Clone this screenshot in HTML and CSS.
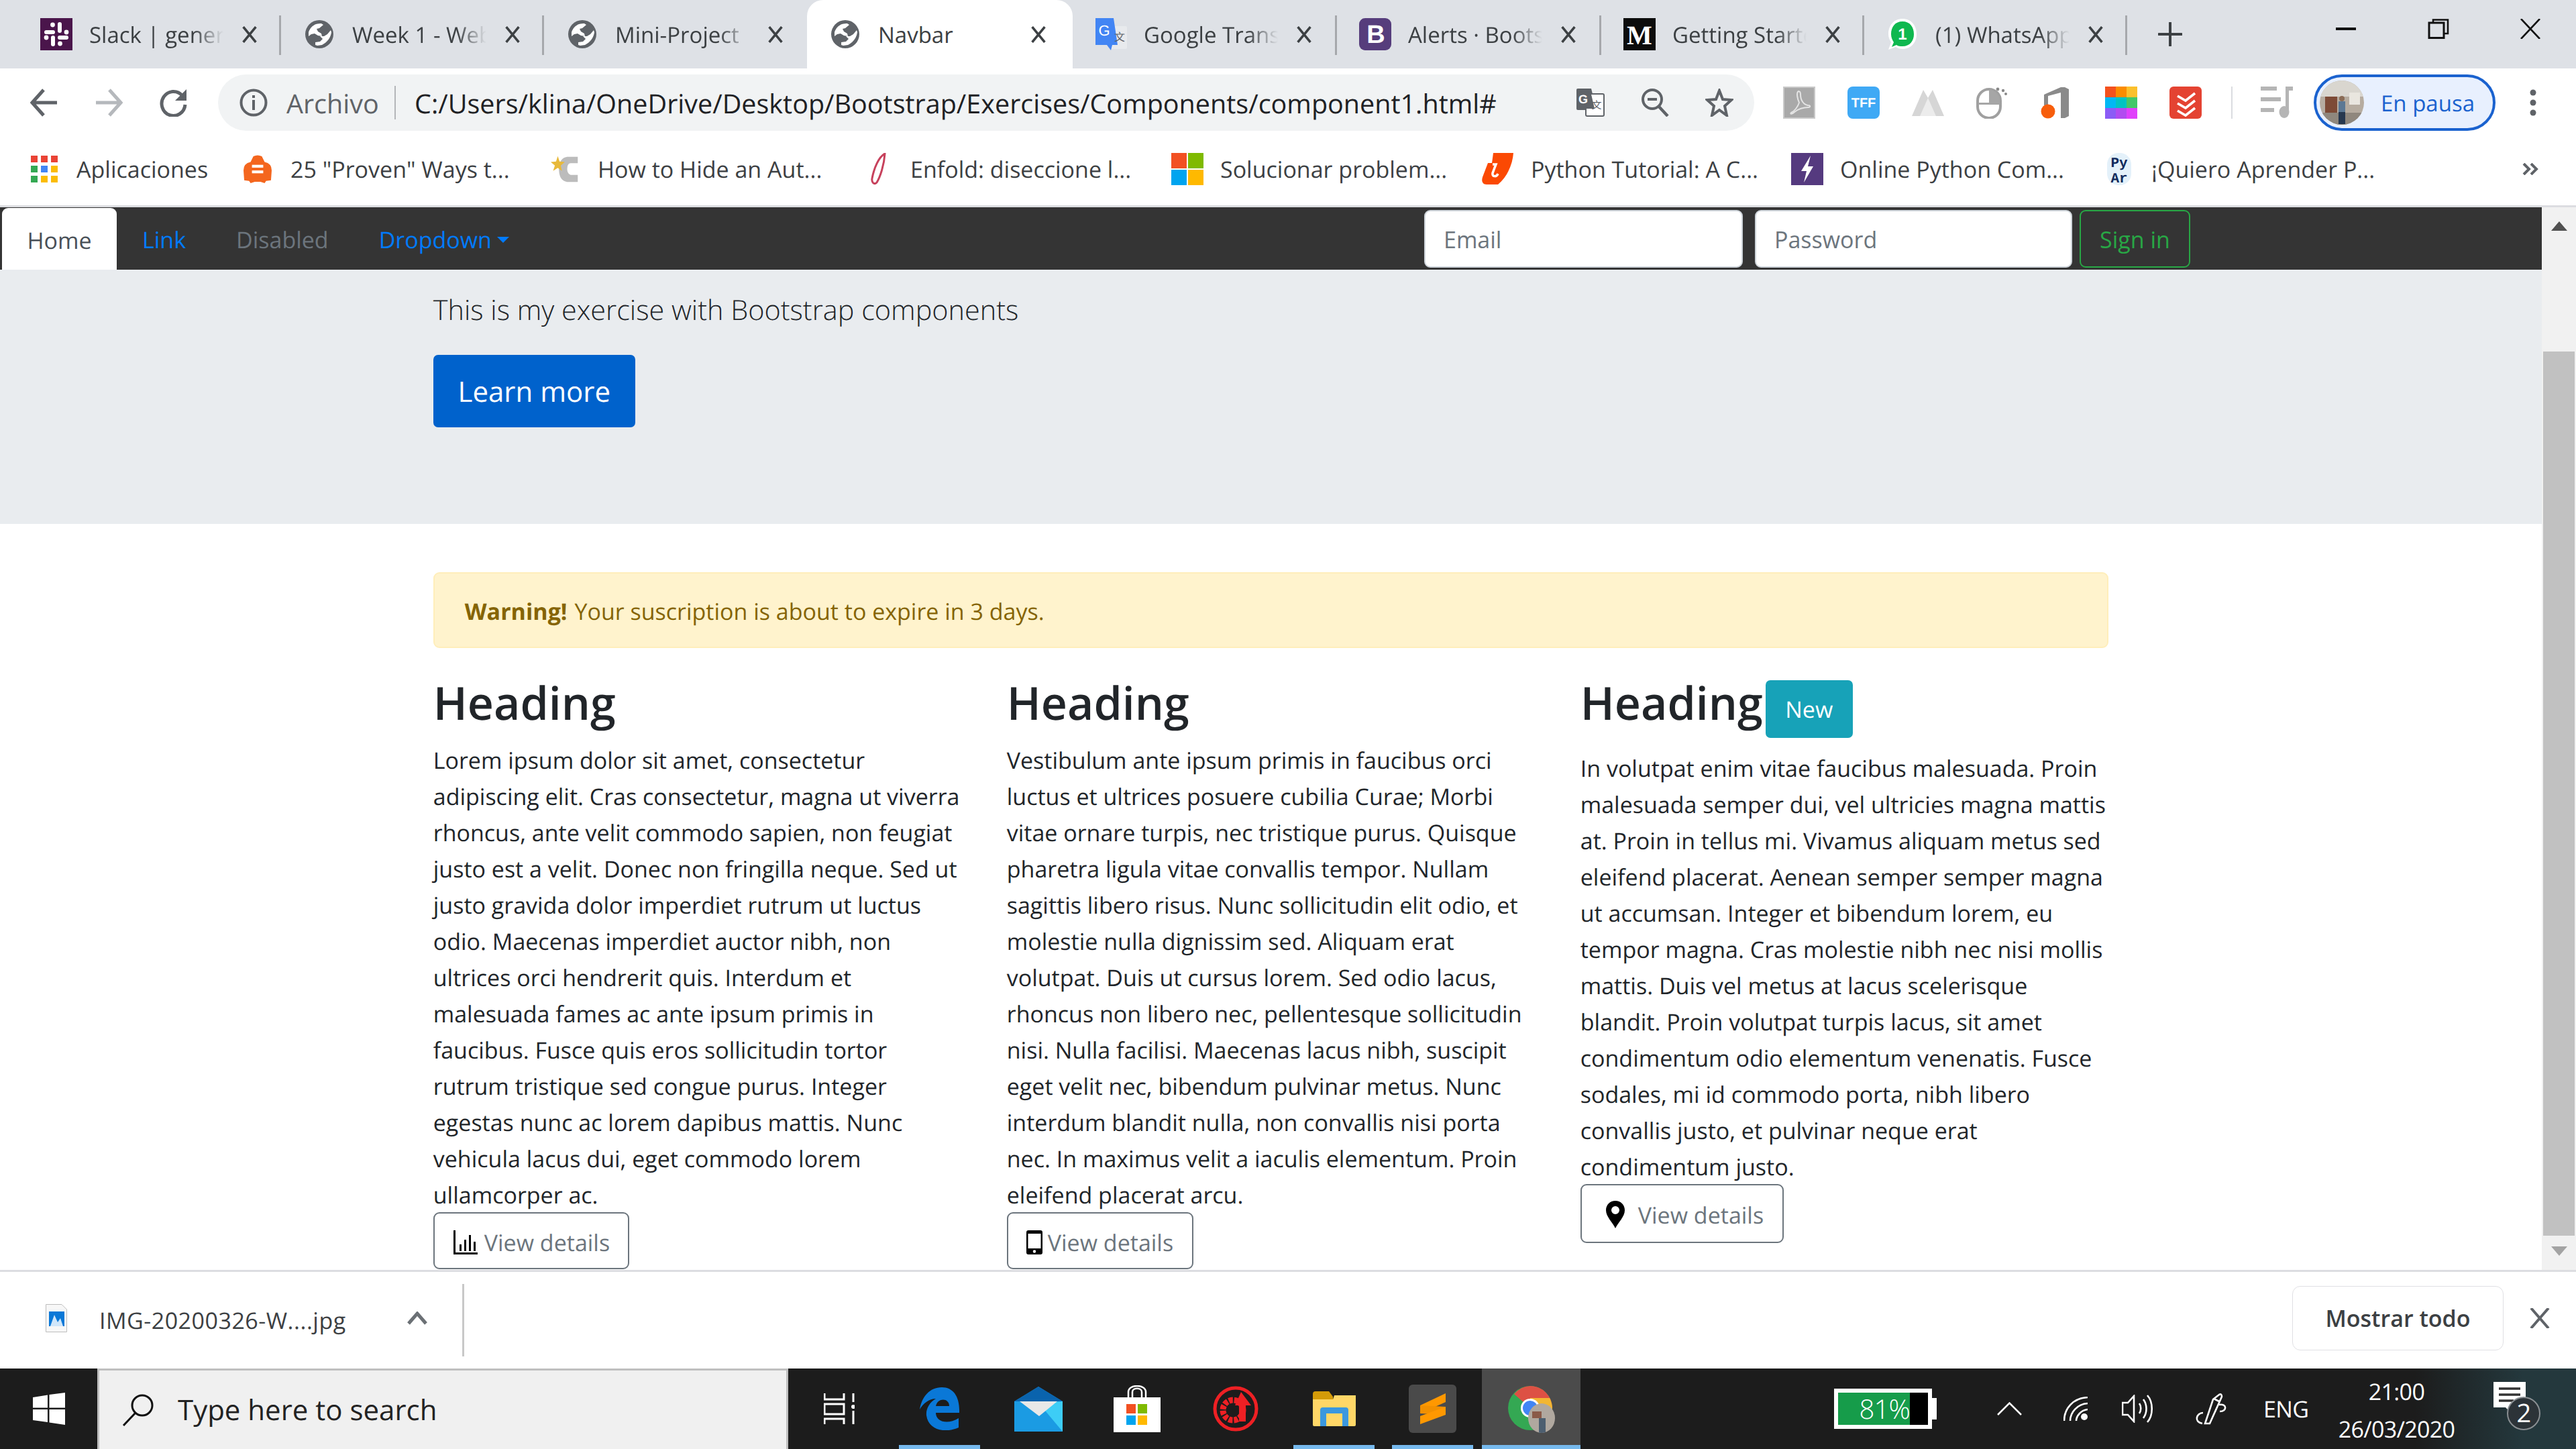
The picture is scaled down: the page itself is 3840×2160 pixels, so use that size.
FILE: index.html
```html
<!DOCTYPE html>
<html lang="en">
<head>
<meta charset="utf-8">
<title>Navbar</title>
<link rel="stylesheet" href="styles.css">
</head>
<body>
<svg class="defs" width="0" height="0">
  <symbol id="globe" viewBox="0 0 42 42"><circle cx="21" cy="21" r="21" fill="#5f6368"/><path d="M5 24 L5 18 C7 12 11 8 16 6 C19 5 22 5 24 5 L27 7 L21 12 L17 13 L19 17 L24 20 L25 24 L19 23 L14 20 L9 21 Z" fill="#fff"/><path d="M38 15 L39 18 C38 26 33 33 25 37 L18 38 L15 37 L15 33 L22 32 L26 28 L22 24 L28 24 L33 21 Z" fill="#fff"/></symbol>
  <symbol id="close" viewBox="0 0 24 24"><path d="M3 1 L21 23 M21 1 L3 23" stroke="#3c4043" stroke-width="3.4" fill="none"/></symbol>
</svg>

<header class="tabstrip">
  <div class="tab"><svg class="fav" viewBox="0 0 48 48"><rect width="48" height="48" fill="#4a154b"/><g fill="#fff"><rect x="6" y="18" width="16" height="6" rx="3"/><circle cx="18.500" cy="10" r="3.400"/><rect x="26" y="6" width="6" height="16" rx="3"/><circle cx="39" cy="21" r="3.400"/><rect x="26" y="26" width="16" height="6" rx="3"/><circle cx="29.500" cy="38" r="3.400"/><rect x="16" y="26" width="6" height="16" rx="3"/><circle cx="9" cy="29" r="3.400"/></g></svg><span class="tab-title">Slack | general</span><svg class="x"><use href="#close"/></svg></div>
  <div class="tab"><svg class="fav globe"><use href="#globe"/></svg><span class="tab-title">Week 1 - Web</span><svg class="x"><use href="#close"/></svg></div>
  <div class="tab tab-nosep"><svg class="fav globe"><use href="#globe"/></svg><span class="tab-title">Mini-Project</span><svg class="x"><use href="#close"/></svg></div>
  <div class="tab tab-active"><svg class="fav globe"><use href="#globe"/></svg><span class="tab-title">Navbar</span><svg class="x"><use href="#close"/></svg></div>
  <div class="tab"><svg class="fav" viewBox="0 0 48 48"><rect x="22" y="12" width="26" height="34" rx="2" fill="#e8eaed"/><path d="M1 0 H28 L34 40 H26 L24 48 L18 40 H1 Z" fill="#4285f4"/><text x="14" y="26" class="svgtxt" font-size="22" fill="#fff" text-anchor="middle">G</text><text x="37" y="34" class="svgtxt" font-size="16" fill="#5f6368" text-anchor="middle">文</text></svg><span class="tab-title">Google Translate</span><svg class="x"><use href="#close"/></svg></div>
  <div class="tab"><svg class="fav" viewBox="0 0 48 48"><rect width="48" height="48" rx="9" fill="#563d7c"/><text x="25" y="37" class="svgtxt" font-size="38" font-weight="700" fill="#fff" text-anchor="middle">B</text></svg><span class="tab-title">Alerts · Bootstrap</span><svg class="x"><use href="#close"/></svg></div>
  <div class="tab"><svg class="fav" viewBox="0 0 48 48"><rect width="48" height="48" fill="#0c0c0c"/><text x="24" y="39" class="svgserif" font-size="40" font-weight="700" fill="#fff" text-anchor="middle">M</text></svg><span class="tab-title">Getting Started</span><svg class="x"><use href="#close"/></svg></div>
  <div class="tab"><svg class="fav" viewBox="0 0 48 48"><path d="M24 1 C11 1 3 11 3 24 C3 29 5 33 7 36 L3 47 L14 43 C17 45 20 46 24 46 C37 46 45 36 45 24 C45 11 37 1 24 1 Z" fill="#fff"/><path d="M24 5 C13 5 7 13 7 24 C7 29 9 33 11 36 L8 43 L15 40 C18 42 20 42 24 42 C35 42 41 34 41 24 C41 13 35 5 24 5 Z" fill="#0fb84f"/><text x="24" y="32" class="svgtxt" font-size="24" font-weight="700" fill="#fff" text-anchor="middle">1</text></svg><span class="tab-title">(1) WhatsApp</span><svg class="x"><use href="#close"/></svg></div>
  <svg class="newtab" viewBox="0 0 36 36"><path d="M18 1 V35 M1 18 H35" stroke="#3c4043" stroke-width="4" stroke-linecap="round"/></svg>
  <div class="winctl">
    <svg class="win-min" viewBox="0 0 30 4"><rect width="30" height="4" fill="#111"/></svg>
    <svg class="win-max" viewBox="0 0 32 30"><path d="M8 5 V1.500 H30 V22 H24" fill="none" stroke="#111" stroke-width="2.600"/><rect x="2" y="6" width="22" height="22.500" fill="none" stroke="#111" stroke-width="3"/></svg>
    <svg class="win-close" viewBox="0 0 30 30"><path d="M1 0 L29 30 M29 0 L1 30" stroke="#111" stroke-width="2.6"/></svg>
  </div>
</header>

<nav class="toolbar">
  <svg class="nav-ic" viewBox="0 0 42 42"><path d="M40 21 H5 M20 2 L3 21 L20 40" fill="none" stroke="#5f6368" stroke-width="5"/></svg>
  <svg class="nav-ic" viewBox="0 0 42 42"><path d="M2 21 H37 M22 2 L39 21 L22 40" fill="none" stroke="#b5b8bc" stroke-width="5"/></svg>
  <svg class="nav-ic" viewBox="0 0 42 42"><path d="M35 11 A17.5 18 0 1 0 39 24" fill="none" stroke="#5f6368" stroke-width="5"/><path d="M41 1 V18 H24 Z" fill="#5f6368"/></svg>
  <div class="omnibox">
    <svg class="info" viewBox="0 0 42 42"><circle cx="21" cy="21" r="18.5" fill="none" stroke="#5f6368" stroke-width="4"/><rect x="19" y="17" width="4" height="15" fill="#5f6368"/><rect x="19" y="10" width="4" height="4" fill="#5f6368"/></svg>
    <span class="archivo">Archivo</span>
    <span class="url">C:/Users/klina/OneDrive/Desktop/Bootstrap/Exercises/Components/component1.html#</span>
    <svg class="o-ic o-trans" viewBox="0 0 42 42"><path d="M0 2 Q0 0 2 0 H22 L30 32 H2 Q0 32 0 30 Z" fill="#5f6368"/><rect x="14" y="8" width="27" height="33" rx="2" fill="#fff" stroke="#5f6368" stroke-width="2"/><path d="M14 0 H20 L27 30 H14 Z" fill="#5f6368"/><text x="10" y="22" class="svgtxt" font-size="18" font-weight="700" fill="#fff" text-anchor="middle">G</text><text x="30" y="30" class="svgtxt" font-size="15" fill="#5f6368" text-anchor="middle">文</text></svg>
    <svg class="o-ic o-zoom" viewBox="0 0 42 42"><circle cx="17" cy="16" r="14" fill="none" stroke="#5f6368" stroke-width="4"/><path d="M27 27 L40 41" stroke="#5f6368" stroke-width="4.5"/><rect x="10" y="14" width="14" height="4" fill="#5f6368"/></svg>
    <svg class="o-ic o-star" viewBox="0 0 42 42"><path d="M21 3 L26 16 L39 17 L29 26 L32 40 L21 32 L10 40 L13 26 L3 17 L16 16 Z" fill="none" stroke="#5f6368" stroke-width="4"/></svg>
  </div>
  <div class="extensions">
    <svg viewBox="0 0 48 48"><rect width="48" height="48" fill="#a9a9a9"/><rect x="1" y="1" width="46" height="46" fill="none" stroke="#c9c9c9" stroke-width="2"/><path d="M23 7 C19 9 22 20 24 24 C22 30 17 37 12 39 C10 41 13 42 17 38 C22 34 30 31 38 31 C41 31 41 28 37 28 C31 27 26 21 26 12 C26 8 25 7 23 7 Z" fill="none" stroke="#e4e4e4" stroke-width="2"/></svg>
    <svg viewBox="0 0 48 48"><rect width="48" height="48" rx="8" fill="#3fa9f5"/><text x="24" y="31" class="svgtxt" font-size="20" font-weight="700" fill="#fff" text-anchor="middle">TFF</text></svg>
    <svg viewBox="0 0 48 48"><path d="M0 44 L17 5 L24 17 L31 5 L48 44 Z" fill="#d6d6d6"/><path d="M12 44 L24 17 L36 44 Z" fill="#ececec"/></svg>
    <svg viewBox="0 0 48 48"><rect x="2" y="4" width="34" height="43" rx="17" fill="none" stroke="#a0a0a0" stroke-width="4"/><path d="M19 5 A16 16 0 0 1 35 21 V27 H3 V24 H19 Z" fill="#a6a6a6"/><circle cx="32" cy="4" r="2.4" fill="#888"/><circle cx="40" cy="6" r="2.2" fill="#888"/><circle cx="44" cy="11" r="2" fill="#888"/></svg>
    <svg viewBox="0 0 48 48"><path d="M5 12 L30 1 H36 L42 4 V44 L36 47 H30 V9 L11 14 V28 H5 Z" fill="#8a8a8a"/><circle cx="11" cy="37" r="10.5" fill="#f75e0c"/></svg>
    <svg viewBox="0 0 48 48"><rect width="16" height="16" fill="#f4511e"/><rect x="16" width="16" height="16" fill="#fb8c00"/><rect x="32" width="16" height="16" fill="#fbc02d"/><rect y="16" width="16" height="16" fill="#00b8f4"/><rect x="16" y="16" width="16" height="16" fill="#00c3c3"/><rect x="32" y="16" width="16" height="16" fill="#43c769"/><rect y="32" width="16" height="16" fill="#8b5cf6"/><rect x="16" y="32" width="16" height="16" fill="#b14cf0"/><rect x="32" y="32" width="16" height="16" fill="#e040fb"/></svg>
    <svg class="ext-last" viewBox="0 0 48 48"><rect width="48" height="48" rx="6" fill="#e44332"/><path d="M12 14 L24 21 L38 10 M12 25 L24 32 L38 21 M12 36 L24 43 L38 32" fill="none" stroke="#fff" stroke-width="3.6"/></svg>
    <span class="ext-sep"></span>
    <svg viewBox="0 0 48 48"><g fill="#b5b5b5"><rect y="0" width="24" height="6"/><rect y="16" width="30" height="6"/><rect y="32" width="20" height="6"/><rect x="37" y="0" width="11" height="6"/><rect x="37" y="0" width="5" height="38"/><ellipse cx="35" cy="38" rx="7.5" ry="9"/></g></svg>
  </div>
  <div class="profile">
    <svg class="avatar" viewBox="0 0 66 66"><defs><clipPath id="av"><circle cx="33" cy="33" r="33"/></clipPath></defs><g clip-path="url(#av)"><rect width="66" height="66" fill="#b6aca0"/><rect y="0" width="66" height="24" fill="#d9d6cf"/><rect x="8" y="24" width="18" height="24" fill="#7d4a36"/><rect x="44" y="18" width="16" height="18" fill="#e9e6df"/><rect y="48" width="66" height="18" fill="#8f877d"/><circle cx="33" cy="27" r="4" fill="#8a6b55"/><rect x="28" y="31" width="10" height="16" fill="#5c7894"/><rect x="28" y="47" width="10" height="18" fill="#27384f"/></g></svg>
    <span>En pausa</span>
  </div>
  <svg class="dots" viewBox="0 0 12 40"><circle cx="6" cy="5" r="4.5" fill="#5f6368"/><circle cx="6" cy="20" r="4.5" fill="#5f6368"/><circle cx="6" cy="35" r="4.5" fill="#5f6368"/></svg>
</nav>

<div class="bookmarks">
  <a class="bm"><svg class="bm-ic bm-apps" viewBox="0 0 40 40"><g><rect x="0" width="10" height="10" fill="#ea4335"/><rect x="15" width="10" height="10" fill="#ea4335"/><rect x="30" width="10" height="10" fill="#ea4335"/><rect x="0" y="15" width="10" height="10" fill="#34a853"/><rect x="15" y="15" width="10" height="10" fill="#4285f4"/><rect x="30" y="15" width="10" height="10" fill="#fbbc05"/><rect x="0" y="30" width="10" height="10" fill="#34a853"/><rect x="15" y="30" width="10" height="10" fill="#fbbc05"/><rect x="30" y="30" width="10" height="10" fill="#fbbc05"/></g></svg>Aplicaciones</a>
  <a class="bm"><svg class="bm-ic" viewBox="0 0 40 40"><path d="M14 2 Q20 -1 26 2 L30 10 Q40 12 40 22 L39 36 L32 37 L30 40 L24 38 L16 38 L10 40 L8 37 L1 36 L0 22 Q0 12 10 10 Z" fill="#f4661e"/><rect x="12" y="14" width="16" height="4" fill="#fff"/><rect x="12" y="22" width="16" height="4" fill="#fff"/></svg>25 "Proven" Ways t...</a>
  <a class="bm"><svg class="bm-ic" viewBox="0 0 48 48"><path d="M46 3 H28 Q14 5 14 24 Q14 44 28 46 H46 V34 H34 Q28 32 28 24 Q28 14 34 14 H46 Z" fill="#bcbcbc"/><path d="M12 2 L15 11 L24 12 L17 18 L19 27 L12 22 L4 27 L7 18 L0 12 L9 11 Z" fill="#e8b93a"/></svg>How to Hide an Aut...</a>
  <a class="bm"><svg class="bm-ic bm-pen" viewBox="0 0 24 48"><path d="M22 1 C13 6 6 22 3 38 C2 44 6 48 10 44 C15 36 21 18 22 1 Z" fill="none" stroke="#c7415c" stroke-width="3"/></svg>Enfold: diseccione l...</a>
  <a class="bm"><svg class="bm-ic bm-48" viewBox="0 0 48 48"><rect width="23" height="23" fill="#f25022"/><rect x="25" width="23" height="23" fill="#7fba00"/><rect y="25" width="23" height="23" fill="#00a4ef"/><rect x="25" y="25" width="23" height="23" fill="#ffb900"/></svg>Solucionar problem...</a>
  <a class="bm"><svg class="bm-ic bm-48" viewBox="0 0 48 48"><path d="M17 0 H47 C46 16 38 36 24 47 H7 C1 47 -1 42 1 36 L9 15 H15 Z" fill="#fb4903"/><path d="M16 17 H21 L16 30 C15 36 22 36 24 31" fill="none" stroke="#fff" stroke-width="3.5"/></svg>Python Tutorial: A C...</a>
  <a class="bm"><svg class="bm-ic bm-48" viewBox="0 0 48 48"><rect width="48" height="48" fill="#553a7f"/><path d="M29 4 L15 27 H23 L19 44 L33 20 H25 Z" fill="#fff"/></svg>Online Python Com...</a>
  <a class="bm"><svg class="bm-ic bm-py" viewBox="0 0 36 48"><rect width="36" height="48" rx="17" fill="#e4f1fa"/><text x="18" y="21" class="svgmono" font-size="21" font-weight="700" fill="#102a5c" text-anchor="middle">Py</text><text x="18" y="44" class="svgmono" font-size="21" font-weight="700" fill="#102a5c" text-anchor="middle">Ar</text></svg>¡Quiero Aprender P...</a>
  <svg class="bm-more" viewBox="0 0 26 18"><path d="M3 1 L11 9 L3 17 M14 1 L22 9 L14 17" fill="none" stroke="#5f6368" stroke-width="4"/></svg>
</div>

<div class="viewport">
  <main class="page">
    <div class="navbar">
      <a class="nav-home">Home</a>
      <a class="nav-link nav-first">Link</a>
      <a class="nav-link nav-disabled">Disabled</a>
      <a class="nav-link">Dropdown<i class="caret"></i></a>
      <form class="signin">
        <input class="field" placeholder="Email">
        <input class="field field-pw" placeholder="Password">
        <button class="btn-signin" type="button">Sign in</button>
      </form>
    </div>
    <section class="jumbotron">
      <div class="container">
        <p class="lead">This is my exercise with Bootstrap components</p>
        <a class="btn-learn">Learn more</a>
      </div>
    </section>
    <div class="container">
      <div class="alert"><strong>Warning!</strong> Your suscription is about to expire in 3 days.</div>
      <div class="row">
        <article>
          <h2>Heading</h2>
          <p>Lorem ipsum dolor sit amet, consectetur<br>adipiscing elit. Cras consectetur, magna ut viverra<br>rhoncus, ante velit commodo sapien, non feugiat<br>justo est a velit. Donec non fringilla neque. Sed ut<br>justo gravida dolor imperdiet rutrum ut luctus<br>odio. Maecenas imperdiet auctor nibh, non<br>ultrices orci hendrerit quis. Interdum et<br>malesuada fames ac ante ipsum primis in<br>faucibus. Fusce quis eros sollicitudin tortor<br>rutrum tristique sed congue purus. Integer<br>egestas nunc ac lorem dapibus mattis. Nunc<br>vehicula lacus dui, eget commodo lorem<br>ullamcorper ac.</p>
          <a class="btn-view btn-chart"><svg class="ic-chart" viewBox="0 0 36 36"><path d="M1.5 0 V34.5 H36" fill="none" stroke="#000" stroke-width="3"/><rect x="9" y="21" width="3" height="10" fill="#000"/><rect x="16" y="14" width="3" height="17" fill="#000"/><rect x="23" y="7" width="3" height="24" fill="#000"/><rect x="30" y="17" width="3" height="14" fill="#000"/></svg>View details</a>
        </article>
        <article>
          <h2>Heading</h2>
          <p>Vestibulum ante ipsum primis in faucibus orci<br>luctus et ultrices posuere cubilia Curae; Morbi<br>vitae ornare turpis, nec tristique purus. Quisque<br>pharetra ligula vitae convallis tempor. Nullam<br>sagittis libero risus. Nunc sollicitudin elit odio, et<br>molestie nulla dignissim sed. Aliquam erat<br>volutpat. Duis ut cursus lorem. Sed odio lacus,<br>rhoncus non libero nec, pellentesque sollicitudin<br>nisi. Nulla facilisi. Maecenas lacus nibh, suscipit<br>eget velit nec, bibendum pulvinar metus. Nunc<br>interdum blandit nulla, non convallis nisi porta<br>nec. In maximus velit a iaculis elementum. Proin<br>eleifend placerat arcu.</p>
          <a class="btn-view btn-phone"><svg class="ic-phone" viewBox="0 0 24 36"><path d="M3 0 H21 Q24 0 24 3 V33 Q24 36 21 36 H3 Q0 36 0 33 V3 Q0 0 3 0 Z M2.5 5 V27 H21.5 V5 Z" fill="#000" fill-rule="evenodd"/><circle cx="12" cy="31.5" r="2.2" fill="#fff"/></svg>View details</a>
        </article>
        <article>
          <h2 class="h-badge"><span>Heading</span><span class="badge">New</span></h2>
          <p>In volutpat enim vitae faucibus malesuada. Proin<br>malesuada semper dui, vel ultricies magna mattis<br>at. Proin in tellus mi. Vivamus aliquam metus sed<br>eleifend placerat. Aenean semper semper magna<br>ut accumsan. Integer et bibendum lorem, eu<br>tempor magna. Cras molestie nibh nec nisi mollis<br>mattis. Duis vel metus at lacus scelerisque<br>blandit. Proin volutpat turpis lacus, sit amet<br>condimentum odio elementum venenatis. Fusce<br>sodales, mi id commodo porta, nibh libero<br>convallis justo, et pulvinar neque erat<br>condimentum justo.</p>
          <a class="btn-view btn-pin"><svg class="ic-pin" viewBox="0 0 28 41"><path fill-rule="evenodd" d="M14 0 C6 0 0 6 0 14 C0 24 10 32 14 41 C18 32 28 24 28 14 C28 6 22 0 14 0 Z M14 8 A6 6 0 1 1 14 20 A6 6 0 1 1 14 8 Z" fill="#000"/></svg>View details</a>
        </article>
      </div>
    </div>
  </main>
  <aside class="scrollbar">
    <span class="sb-up"></span>
    <span class="sb-thumb"></span>
    <span class="sb-down"></span>
  </aside>
</div>

<footer class="downloads">
  <div class="dl-item">
    <svg class="dl-file" viewBox="0 0 32 42"><path d="M.5 .5 H24 L31.5 8 V41.5 H.5 Z" fill="#f7f7f7" stroke="#bdbdbd"/><rect x="5" y="11" width="23" height="22" fill="#0a78d7"/><path d="M7 33 L13 16 L18 27 L22 21 L26 33 Z" fill="#cfe6fa"/></svg>
    <span class="dl-name">IMG-20200326-W....jpg</span>
    <svg class="dl-chev" viewBox="0 0 32 20"><path d="M3 18 L16 3 L29 18" fill="none" stroke="#6b7075" stroke-width="5"/></svg>
  </div>
  <button class="dl-all" type="button">Mostrar todo</button>
  <svg class="dl-x" viewBox="0 0 30 30"><path d="M2 0 L28 30 M28 0 L2 30" stroke="#5f6368" stroke-width="4"/></svg>
</footer>

<div class="taskbar">
  <div class="tb-start"><svg viewBox="0 0 48 48"><path d="M0 7 L22 3.5 V22.5 H0 Z M24.5 3 L48 0 V22.5 H24.5 Z M0 25 H22 V44 L0 41 Z M24.5 25 H48 V48 L24.5 44.5 Z" fill="#fff"/></svg></div>
  <div class="tb-search">
    <svg viewBox="0 0 48 48"><circle cx="31" cy="17" r="15" fill="none" stroke="#111" stroke-width="3"/><path d="M21 28 L3 47" stroke="#111" stroke-width="3"/></svg>
    <span>Type here to search</span>
  </div>
  <div class="tb-taskview"><svg viewBox="0 0 46 46"><g fill="none" stroke="#fff" stroke-width="3"><path d="M1 0 V9 H30 V0"/><rect x="1" y="16" width="29" height="15"/><path d="M1 46 V38 H30 V46"/><path d="M44 0 V13 M44 26 V46"/></g><circle cx="44" cy="20" r="3" fill="#fff"/></svg></div>
  <div class="tb-app tb-on"><svg class="ic-edge" viewBox="0 0 60 64"><path d="M0 33 C3 14 15 0 33 0 C50 0 60 14 59 38 H24 C24 52 42 56 58 46 V60 C38 69 13 64 10 42 C9 32 15 22 24 17 C14 17 5 24 0 33 Z M24 28 H44 C44 16 27 15 24 28 Z" fill="#0a78d7" fill-rule="evenodd"/></svg></div>
  <div class="tb-app"><svg class="ic-mail" viewBox="0 0 72 67"><path d="M36 0 L72 22 V67 H0 V22 Z" fill="#1b9be3"/><path d="M36 0 L72 22 L36 22 L0 22 Z" fill="#0a63ad"/><path d="M72 22 V67 L36 24 Z" fill="#3dcdf6"/><path d="M8 22 H64 L37 44 Z" fill="#e8e8e8"/></svg></div>
  <div class="tb-app"><svg class="ic-store" viewBox="0 0 70 70"><path d="M22 20 V10 C22 -2 48 -2 48 10 V20 M28 20 V10 C28 3 42 3 42 10 V20" fill="none" stroke="#fff" stroke-width="2.5"/><rect y="18" width="70" height="52" fill="#fff"/><rect x="19" y="28" width="14" height="14" fill="#f25022"/><rect x="36" y="28" width="14" height="14" fill="#7fba00"/><rect x="19" y="45" width="14" height="14" fill="#00a4ef"/><rect x="36" y="45" width="14" height="14" fill="#ffb900"/></svg></div>
  <div class="tb-app"><svg class="ic-iobit" viewBox="0 0 68 68"><circle cx="34" cy="34" r="31" fill="none" stroke="#ee2024" stroke-width="5"/><circle cx="30" cy="36" r="15" fill="none" stroke="#ee2024" stroke-width="9" stroke-dasharray="6 2"/><path d="M42 9 L57 29 H49 V53 H39 V29 H33 Z" fill="#ee2024"/></svg></div>
  <div class="tb-app tb-on"><svg class="ic-folder" viewBox="0 0 64 52"><path d="M0 4 Q0 0 4 0 H24 L30 8 V14 H0 Z" fill="#d49b08"/><path d="M0 12 H30 L32 6 H64 V50 Q64 52 62 52 H2 Q0 52 0 50 Z" fill="#ffd767"/><path d="M11 52 V28 Q11 24 15 24 H49 Q53 24 53 28 V52 H44 V33 H20 V52 Z" fill="#3b98de"/></svg></div>
  <div class="tb-app tb-on"><svg class="ic-sublime" viewBox="0 0 71 72"><rect width="71" height="72" rx="6" fill="#4a4a4a"/><path d="M55 13 L17 31 V43 L55 26 Z" fill="#ff9800"/><path d="M17 31 L55 33 V45 L17 43 Z" fill="#f29000"/><path d="M55 33 V45 L17 59 V47 Z" fill="#ff9800"/></svg></div>
  <div class="tb-app tb-on tb-active"><svg class="ic-chrome" viewBox="0 0 70 72"><circle cx="33" cy="35" r="33" fill="#34a853"/><path d="M33 2 A33 33 0 0 1 66 35 H33 L9 14 A33 33 0 0 1 33 2 Z" fill="#dd5144"/><path d="M33 20 H62 Q66 28 66 36 L50 60 L33 35 Z" fill="#f2b632"/><circle cx="33" cy="35" r="14" fill="#fff"/><circle cx="33" cy="35" r="11" fill="#4285f4"/><defs><clipPath id="av2"><ellipse cx="50" cy="50" rx="20" ry="22"/></clipPath></defs><g clip-path="url(#av2)"><rect x="28" y="28" width="44" height="44" fill="#b0a89f"/><rect x="46" y="50" width="10" height="22" fill="#4d5f70"/><rect x="36" y="40" width="14" height="10" fill="#8a5a48"/></g></svg></div>
  <div class="tray">
    <div class="battery"><div class="batt-body"><span class="batt-fill">81%</span></div><i class="batt-tip"></i></div>
    <svg class="tr-caret" viewBox="0 0 37 20"><path d="M1 19 L18.500 1.500 L36 19" fill="none" stroke="#fff" stroke-width="2.5"/></svg>
    <svg class="tr-wifi" viewBox="0 0 36 36"><g fill="none" stroke="#fff" stroke-width="2.6"><path d="M1 36 C1 18 14 2 36 1"/><path d="M10 36 C10 24 20 11 36 10"/><path d="M19 36 C19 29 26 20 36 19"/></g><circle cx="31" cy="30" r="5" fill="#fff"/></svg>
    <svg class="tr-vol" viewBox="0 0 48 42"><g fill="none" stroke="#fff" stroke-width="2.6"><path d="M1 12 H9 L18 2 V40 L9 30 H1 Z"/><path d="M26 13 C29 17 29 24 26 28"/><path d="M32 7 C38 15 38 27 32 35"/><path d="M38 1 C47 11 47 31 38 41"/></g></svg>
    <svg class="tr-pen" viewBox="0 0 48 48"><g fill="none" stroke="#fff" stroke-width="2.6"><path d="M15 46 L27 10 L36 3 Q40 1 40 6 L22 46 Z"/><path d="M28 9 L36 13"/><path d="M12 30 C2 30 -2 44 11 46"/><path d="M36 18 C48 16 48 28 37 28"/></g></svg>
    <span class="tr-lang">ENG</span>
    <div class="tr-clock"><span>21:00</span><span>26/03/2020</span></div>
    <div class="tr-notif"><svg viewBox="0 0 48 48"><path d="M0 0 H48 V38 H24 L24 44 L18 38 H0 Z" fill="#fff"/><path d="M8 10 H40 M8 19 H40 M8 28 H30" stroke="#333" stroke-width="3.5"/></svg><span class="tr-badge">2</span></div>
  </div>
</div>
</body>
</html>
```
FILE: styles.css
```css
* { box-sizing: border-box; }
html, body { margin: 0; padding: 0; }
body {
  width: 3840px;
  height: 2160px;
  overflow: hidden;
  display: flex;
  flex-direction: column;
  background: #fff;
  font-family: "Open Sans", "Liberation Sans", sans-serif;
  color: #212529;
  text-rendering: geometricPrecision;
}
.defs { position: absolute; }
.svgtxt { font-family: "Liberation Sans", "Noto Sans CJK SC", sans-serif; }
.svgserif { font-family: "Liberation Serif", serif; }
.svgmono { font-family: "Liberation Mono", monospace; }
a { text-decoration: none; }

/* Tab strip */
.tabstrip {
  height: 102px;
  flex: none;
  display: flex;
  background: #dee1e6;
  padding-left: 27px;
  position: relative;
}
.tab {
  width: 392px;
  flex: none;
  display: flex;
  align-items: center;
  padding-left: 33px;
  font-size: 33px;
  color: #3c4043;
  position: relative;
  height: 102px;
}
.tab::after {
  content: "";
  position: absolute;
  right: 0;
  top: 23px;
  width: 3px;
  height: 59px;
  background: #a6a8ac;
}
.tab-nosep::after { display: none; }
.tab-active { background: #fff; border-radius: 24px 24px 0 0; color: #3c4043; }
.tab-active::after { display: none; }
.tab:nth-child(4) { width: 396px; }
.tab:nth-child(5) { width: 394px; }
.tab:nth-child(6) { width: 394px; }
.fav { width: 48px; height: 48px; flex: none; }
.globe { width: 42px; height: 42px; margin: 0 3px; }
.tab-title {
  margin-left: 25px;
  width: 200px;
  white-space: nowrap;
  overflow: hidden;
  -webkit-mask-image: linear-gradient(90deg, #000 78%, transparent 100%);
  mask-image: linear-gradient(90deg, #000 78%, transparent 100%);
}
.tab-active .tab-title { mask-image: none; -webkit-mask-image: none; }
.x { width: 26px; height: 25px; margin-left: 26px; flex: none; }
.newtab { width: 36px; height: 36px; align-self: center; margin-left: 46px; flex: none; }
.winctl { margin-left: auto; display: flex; align-items: flex-start; }
.win-min { width: 30px; height: 4px; margin: 41px 0 0 0; }
.win-max { width: 32px; height: 30px; margin: 28px 0 0 107px; }
.win-close { width: 30px; height: 30px; margin: 28px 53px 0 106px; }

/* Toolbar */
.toolbar {
  height: 102px;
  flex: none;
  display: flex;
  align-items: center;
  padding-left: 45px;
}
.nav-ic { width: 42px; height: 42px; flex: none; margin-right: 54px; }
.omnibox {
  width: 2290px;
  height: 84px;
  margin-left: -8px;
  flex: none;
  display: flex;
  align-items: center;
  background: #f1f3f4;
  border-radius: 42px;
  padding-left: 32px;
  font-size: 39.5px;
}
.info { width: 42px; height: 42px; flex: none; }
.archivo { margin-left: 28px; color: #5f6368; width: 163px; flex: none; border-right: 2px solid #b4b6b9; line-height: 48px; padding-top: 2px; }
.url { margin-left: 28px; color: #202124; white-space: nowrap; width: 1700px; padding-top: 2px; }
.o-ic { width: 42px; height: 42px; flex: none; }
.o-trans { margin-left: 32px; }
.o-zoom { margin-left: 54px; }
.o-star { margin-left: 54px; }
.extensions { display: flex; align-items: center; margin-left: 43px; flex: none; }
.extensions svg { width: 48px; height: 48px; margin-right: 48px; flex: none; }
.extensions .ext-last { margin-right: 44px; }
.ext-sep { width: 2px; height: 48px; background: #dadce0; margin-right: 42px; }
.extensions svg:last-child { margin-right: 0; }
.profile {
  width: 271px;
  height: 84px;
  margin-left: 31px;
  flex: none;
  display: flex;
  align-items: center;
  background: #e8f0fe;
  border: 4px solid #1a62cf;
  border-radius: 42px;
  padding-left: 5px;
  color: #1a62cf;
  font-size: 33px;
}
.avatar { width: 66px; height: 66px; flex: none; margin-right: 25px; }
.dots { width: 12px; height: 40px; margin-left: 50px; flex: none; }

/* Bookmarks */
.bookmarks {
  height: 105px;
  flex: none;
  display: grid;
  grid-template-columns: 317px 458px 476px 449px 463px 461px 471px 618px 25px;
  align-items: center;
  padding: 0 0 7px 46px;
  border-bottom: 3px solid #dcdde1;
  font-size: 34px;
}
.bm { display: flex; align-items: center; color: #3c4043; white-space: nowrap; }
.bm-ic { width: 42px; height: 42px; flex: none; margin-right: 28px; }
.bm-apps { width: 40px; height: 40px; }
.bm-pen { width: 24px; height: 48px; margin-right: 36px; }
.bm-48 { width: 48px; height: 48px; margin-right: 25px; }
.bm-py { width: 36px; height: 48px; margin-right: 30px; }
.bm-more { width: 26px; height: 18px; }

/* Page viewport */
.viewport { height: 1584px; flex: none; display: flex; overflow: hidden; }
.page { width: 3789px; flex: none; overflow: hidden; font-size: 34px; line-height: 54px; }
.navbar { height: 93px; display: flex; align-items: center; background: #343434; }
.nav-home {
  width: 171px;
  height: 92px;
  margin: 1px 0 0 3px;
  padding-top: 3px;
  background: #fff;
  color: #495057;
  border-radius: 9px 9px 0 0;
  display: flex;
  align-items: center;
  justify-content: center;
}
.nav-link { padding: 3px 37.5px 0; color: #007bff; display: flex; align-items: center; }
.nav-first { margin-left: 0.5px; }
.nav-disabled { color: #6c757d; }
.caret {
  margin: 0 0 0 8px;
  width: 0;
  height: 0;
  border-top: 9px solid #007bff;
  border-left: 9px solid transparent;
  border-right: 9px solid transparent;
}
.signin { margin-left: auto; margin-right: 524px; display: flex; align-items: center; }
.field {
  width: 475px;
  height: 86px;
  border: 2px solid #ced4da;
  border-radius: 9px;
  padding: 3px 27px 0;
  background: #fff;
  font: inherit;
  color: #495057;
}
.field::placeholder { color: #6c757d; opacity: 1; }
.field-pw { width: 473px; margin-left: 18px; }
.btn-signin {
  width: 165px;
  height: 86px;
  margin-left: 11px;
  padding: 3px 0 0;
  background: transparent;
  border: 2.25px solid #28a745;
  border-radius: 9px;
  color: #28a745;
  font: inherit;
}
.jumbotron { height: 379px; background: #e9ecef; padding-top: 27px; margin-bottom: 72px; }
.container { width: 2565px; margin: 0 auto; padding: 0 33.75px; }
.lead { margin: 0 0 32px; font-size: 41.4px; line-height: 67.5px; font-weight: 300; }
.btn-learn {
  display: flex;
  align-items: center;
  justify-content: center;
  width: 301px;
  height: 108px;
  padding-top: 3px;
  background: #0062cc;
  color: #fff;
  font-size: 42px;
  border-radius: 7px;
}
.alert {
  height: 112.5px;
  display: flex;
  align-items: center;
  gap: 0.32em;
  background: #fff3cd;
  border: 2.25px solid #ffeeba;
  border-radius: 9px;
  padding: 3px 45px 0;
  color: #856404;
  margin-bottom: 36px;
}
.alert strong { font-weight: 700; }
.row { display: grid; grid-template-columns: repeat(3, 787.5px); column-gap: 67.5px; }
h2 { margin: 0 0 18px; padding-top: 3px; height: 86.4px; font-size: 68px; line-height: 83.4px; font-weight: 600; }
.h-badge { display: grid; grid-template-columns: 276px 130px; height: 98px; }
.badge {
  height: 86px;
  margin-top: 9px;
  background: #17a2b8;
  color: #fff;
  font-size: 34px;
  font-weight: 400;
  line-height: 86px;
  text-align: center;
  border-radius: 7px;
}
article p { margin: 3px 0 -1px; white-space: nowrap; }
.btn-view {
  display: flex;
  align-items: center;
  height: 85.5px;
  padding-top: 4px;
  border: 2.25px solid #6c757d;
  border-radius: 9px;
  color: #6c757d;
  white-space: nowrap;
}
.btn-chart { width: 292px; padding-left: 28px; }
.btn-phone { width: 278px; padding-left: 27px; }
.btn-pin { width: 303px; height: 88px; padding-left: 36px; }
.ic-chart { width: 36px; height: 36px; margin-right: 10px; flex: none; }
.ic-phone { width: 24px; height: 36px; margin-right: 8px; flex: none; }
.ic-pin { width: 28px; height: 41px; margin-right: 20px; flex: none; }

/* Scrollbar */
.scrollbar { width: 51px; flex: none; background: #f1f1f1; display: flex; flex-direction: column; align-items: center; }
.sb-up { margin: 21px 0 0; width: 0; height: 0; border-left: 12px solid transparent; border-right: 12px solid transparent; border-bottom: 14px solid #505050; }
.sb-thumb { width: 47px; height: 1318px; margin-top: 180px; background: #c1c1c1; }
.sb-down { margin-top: 16px; width: 0; height: 0; border-left: 12px solid transparent; border-right: 12px solid transparent; border-top: 14px solid #a3a3a3; }

/* Download bar */
.downloads {
  height: 147px;
  flex: none;
  border-top: 3px solid #dcdde1;
  display: flex;
  align-items: center;
  font-size: 34px;
  color: #3c4043;
}
.dl-item { width: 692px; height: 108px; display: flex; align-items: center; padding-left: 68px; border-right: 3px solid #c8c8c8; }
.dl-file { width: 32px; height: 42px; flex: none; margin: -6px 48px 0 0; }
.dl-name { width: 458px; white-space: nowrap; letter-spacing: 0.5px; }
.dl-chev { width: 32px; height: 20px; flex: none; margin-top: -6px; }
.dl-all {
  width: 315px;
  height: 96px;
  margin-left: auto;
  margin-top: -6px;
  padding: 0;
  background: #fff;
  border: 1.5px solid #e0e0e4;
  border-radius: 12px;
  font: inherit;
  font-weight: 600;
  color: #3c4043;
}
.dl-x { width: 30px; height: 30px; margin: -6px 39px 0 39px; flex: none; }

/* Taskbar */
.taskbar {
  height: 120px;
  flex: none;
  display: flex;
  background: linear-gradient(90deg, #1c1c1c 0, #1c1c1c 3600px, #24383d 3760px, #24383d 100%);
  color: #fff;
}
.tb-start { width: 145px; flex: none; display: flex; align-items: center; justify-content: center; }
.tb-start svg { width: 48px; height: 48px; }
.tb-search {
  width: 1030px;
  flex: none;
  display: flex;
  align-items: center;
  background: #f0f0f0;
  border: 3px solid #bfbfbf;
  border-bottom: 0;
  padding-left: 33px;
  color: #222;
  font-size: 42px;
}
.tb-search svg { width: 48px; height: 48px; margin-right: 36px; flex: none; }
.tb-taskview { width: 152px; flex: none; display: flex; align-items: center; justify-content: center; }
.tb-taskview svg { width: 46px; height: 46px; }
.tb-app { width: 147px; flex: none; display: flex; align-items: center; justify-content: center; position: relative; }
.tb-on::after {
  content: "";
  position: absolute;
  left: 13px;
  right: 13px;
  bottom: 0;
  height: 6px;
  background: #76b9ed;
}
.tb-active { background: #4b4b4b; }
.tb-active::after { left: 0; right: 0; }
.ic-edge { width: 60px; height: 64px; }
.ic-mail { width: 72px; height: 67px; }
.ic-store { width: 70px; height: 70px; }
.ic-iobit { width: 68px; height: 68px; }
.ic-folder { width: 64px; height: 52px; }
.ic-sublime { width: 71px; height: 72px; }
.ic-chrome { width: 70px; height: 72px; }
.tray { margin-left: 378px; flex: 1; display: flex; align-items: center; font-size: 34px; letter-spacing: -0.02em; }
.battery { display: flex; align-items: center; flex: none; }
.batt-body { width: 146px; height: 60px; border: 6px solid #fff; background: #000; display: flex; }
.batt-fill {
  width: 107px;
  background: #169c4a;
  color: #fff;
  font-size: 40px;
  font-weight: 300;
  line-height: 48px;
  text-align: right;
  letter-spacing: -0.02em;
}
.batt-tip { width: 7px; height: 32px; background: #fff; }
.tr-caret { width: 37px; height: 20px; margin-left: 90px; flex: none; }
.tr-wifi { width: 36px; height: 36px; margin: 0 0 0 62px; flex: none; }
.tr-vol { width: 48px; height: 42px; margin-left: 51px; flex: none; }
.tr-pen { width: 48px; height: 48px; margin-left: 61px; flex: none; }
.tr-lang { margin-left: 54px; flex: none; width: 70px; }
.tr-clock { margin-left: 39px; width: 179px; padding-top: 4px; display: flex; flex-direction: column; align-items: center; gap: 16px; line-height: 40px; flex: none; white-space: nowrap; }
.tr-notif { margin-left: 55px; width: 70px; height: 80px; position: relative; flex: none; }
.tr-notif svg { width: 48px; height: 48px; position: absolute; left: 0; top: 0; }
.tr-badge {
  position: absolute;
  left: 20px;
  top: 22px;
  width: 50px;
  height: 50px;
  border-radius: 50%;
  background: #2c3338;
  border: 2px solid #8a8f93;
  color: #fff;
  font-size: 38px;
  line-height: 44px;
  text-align: center;
}
```
